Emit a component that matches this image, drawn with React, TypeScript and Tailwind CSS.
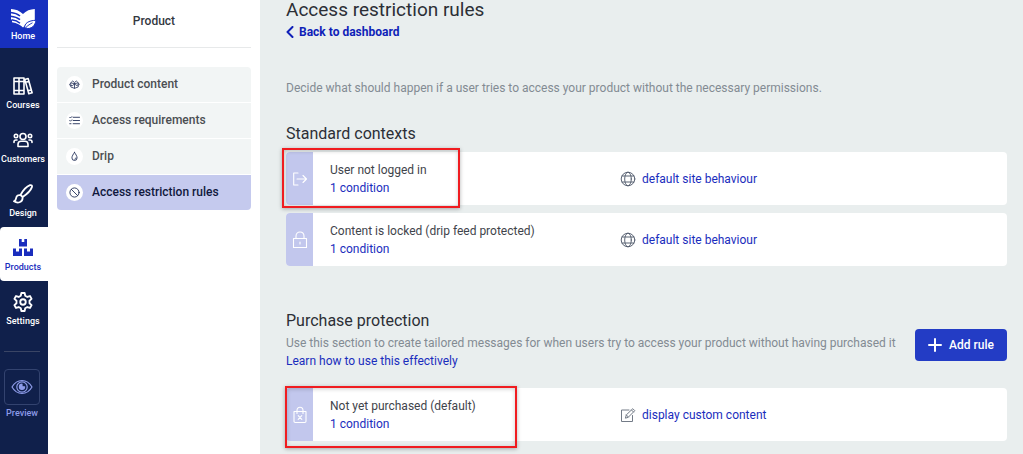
import type { ReactNode } from "react";
import clsx from "clsx";

type IconProps = { className?: string };

function Svg({
  box = "0 0 24 24",
  width = 2,
  className,
  children,
}: IconProps & { box?: string; width?: number; children: ReactNode }) {
  return (
    <svg
      viewBox={box}
      className={clsx("shrink-0", className)}
      fill="none"
      stroke="currentColor"
      strokeWidth={width}
      strokeLinecap="round"
      strokeLinejoin="round"
      aria-hidden="true"
    >
      {children}
    </svg>
  );
}

function LogoIcon() {
  return (
    <svg viewBox="0 0 26 22" className="h-[22px] w-[26px]" aria-hidden="true">
      <path d="M1 1C5.500 1.200 9.800 2.800 13 6 16 2.800 20.300 1.200 24.800 1V12.500L15 17.500 13 19.500C10.500 16.800 7 15 2 14.200V12L1 11.800Z" fill="#fff" />
      <path d="M.5 4.600C4.500 4.900 7.500 5.900 10 8M.5 8.200C4.500 8.500 7.500 9.500 10 11.600M1.500 11.800C5 12.200 7.700 13.100 10 15.200" fill="none" stroke="#1730bf" strokeWidth="1.500" />
      <path d="M14.800 20C14 15.600 18.500 12.400 26 12.300 25.300 17.800 21 21.500 16 20.300Z" fill="#fff" stroke="#1730bf" strokeWidth="1" />
      <path d="M14.300 21.500C16.500 18.300 19 16.600 22.500 14.800" fill="none" stroke="#1730bf" strokeWidth="0.900" />
    </svg>
  );
}

function BooksIcon() {
  return (
    <Svg box="0 0 20 18" width={1.6} className="h-[18px] w-5">
      <path d="M1 1h5v16H1zM6 1h5v16H6zM1 4.500h10M1 13.500h10M11.800 2.400l3.300-.9 4 14.300-3.300.9zM12.600 5.300l3.300-.9M15 13.800l3.300-.9" />
    </Svg>
  );
}

function CustomersIcon() {
  return (
    <Svg box="0 0 20 16" width={1.6} className="h-4 w-5">
      <circle cx="10" cy="4.500" r="3" />
      <circle cx="3" cy="4" r="1.700" />
      <circle cx="17" cy="4" r="1.700" />
      <path d="M5 14.500v-2.200c0-1.800 1.300-3 3-3h4c1.700 0 3 1.200 3 3v2.200zM1 10.500V9.700C1 8.500 1.800 8 3 8h1M19 10.500v-.8C19 8.500 18.200 8 17 8h-1" />
    </Svg>
  );
}

function BrushIcon() {
  return (
    <Svg box="0 0 20 20" width={1.8} className="size-5">
      <path d="M7.500 11C10 6.500 13.500 2.500 17 1.200c1.500-.5 2.400.5 1.900 1.900C17.700 6.600 13.800 10.200 9.600 13zM7.500 11.200c-2.300-.6-4 .5-4.300 2.700-.2 1.600-.7 2.700-2.200 3.400 3.500 2.300 8.600 1.300 8.600-3.200M7.600 11.100l2.200 2.200" />
    </Svg>
  );
}

function BoxesIcon() {
  return (
    <svg viewBox="0 0 20 18" className="h-[18px] w-5" fill="currentColor" aria-hidden="true">
      <path d="M6 0h2.700v3h2.600V0H14v7.500H6zM0 9.500h3v3h3v-3h3V17H0zM11 9.500h3v3h3v-3h3V17h-9z" />
    </svg>
  );
}

function GearIcon() {
  return (
    <Svg width={2} className="size-[22px]">
      <path d="M9.600 5.200 10.200 2.200h3.600l.6 3 2.300 1.300 2.900-1 1.800 3.100-2.300 2v2.800l2.300 2-1.800 3.100-2.900-1-2.300 1.300-.6 3h-3.600l-.6-3-2.300-1.300-2.900 1-1.800-3.100 2.300-2v-2.800l-2.300-2 1.800-3.100 2.900 1z" />
      <circle cx="12" cy="12" r="3" />
    </Svg>
  );
}

function EyeIcon() {
  return (
    <Svg box="0 0 22 16" width={1.2} className="h-4 w-[22px]">
      <path d="M1 8c2.500-4.300 6-6.500 10-6.500S18.500 3.700 21 8c-2.500 4.300-6 6.500-10 6.500S3.500 12.300 1 8z" />
      <circle cx="11" cy="8" r="5.200" />
      <path d="M11 5.200a2.600 2.600 0 1 0 2.600 2.600h-2.600z" fill="currentColor" />
    </Svg>
  );
}

function PackageIcon() {
  return (
    <Svg box="0 0 12 12" width={0.9} className="size-[11px]">
      <path d="M2 6.300v2.400l4 1.500 4-1.500V6.300M6 5v5M1.800 4.300 4 2.200 6 3.800 8 2.200l2.200 2.100M.8 6.200l1-1.900L6 5l4.200-.7 1 1.900L7.700 7 6 5 4.300 7z" />
    </Svg>
  );
}

function ChecklistIcon() {
  return (
    <Svg box="0 0 12 12" width={1} className="size-[11px]">
      <path d="M4.500 2.500h7M4.500 6h7M4.500 9.500h7M.8 2.500l.8.800 1.400-1.500M.8 6l.8.800L3 5.300M.8 9.500h1.400" />
    </Svg>
  );
}

function DropIcon() {
  return (
    <Svg box="0 0 12 12" width={1} className="size-[11px]">
      <path d="M6 1.500C7.300 3.600 8.800 5.500 8.800 7.500a2.800 2.800 0 0 1-5.600 0C3.200 5.500 4.700 3.600 6 1.500zM6.300 9c.8-.2 1.200-.6 1.300-1.400" />
    </Svg>
  );
}

function BanIcon() {
  return (
    <Svg box="0 0 12 12" width={1} className="size-[11px]">
      <circle cx="6" cy="6" r="5" />
      <path d="m2.500 2.500 7 7" />
    </Svg>
  );
}

function LogoutIcon() {
  return (
    <Svg box="0 0 16 16" width={1.1} className="size-4">
      <path d="M6 2H1.700v12H6M5 8h9.500M11 4.500 14.500 8 11 11.500" />
    </Svg>
  );
}

function LockIcon() {
  return (
    <Svg box="0 0 16 18" width={1.1} className="h-[18px] w-4">
      <path d="M1.500 7.500h13v9h-13zM4 7.500V5.200C4 2.800 5.700 1 8 1s4 1.800 4 4.200v2.300M8 11v2" />
    </Svg>
  );
}

function BagIcon() {
  return (
    <Svg box="0 0 16 18" width={1.1} className="h-[18px] w-4">
      <path d="M2 5.500h12v9.800c0 .8-.5 1.200-1.200 1.200H3.200c-.7 0-1.200-.4-1.200-1.200zM5 7.500V4.500C5 2.500 6.200 1.200 8 1.200s3 1.300 3 3.300v3M6.200 9.700l3.600 3.600M9.800 9.700l-3.600 3.600" />
    </Svg>
  );
}

function GlobeIcon() {
  return (
    <Svg box="0 0 16 16" width={1} className="size-4 text-[#596273]">
      <circle cx="8" cy="8" r="6.800" />
      <ellipse cx="8" cy="8" rx="3.300" ry="6.800" />
      <path d="M2 5h12M2 11h12" />
    </Svg>
  );
}

function EditIcon() {
  return (
    <Svg box="0 0 16 16" width={1} className="size-4 text-[#737b87]">
      <path d="M9 3H1.500v11.500h11V8.500M5.500 10.800l.8-2.900 6.500-6.200 2 2-6.400 6.400zM11.500 3l2 2M6.300 7.900l2.100 2.200" />
    </Svg>
  );
}

const mainNav = [
  { label: "Courses", icon: <BooksIcon /> },
  { label: "Customers", icon: <CustomersIcon /> },
  { label: "Design", icon: <BrushIcon /> },
  { label: "Products", icon: <BoxesIcon />, active: true },
  { label: "Settings", icon: <GearIcon /> },
];

const productNav = [
  { label: "Product content", icon: <PackageIcon /> },
  { label: "Access requirements", icon: <ChecklistIcon /> },
  { label: "Drip", icon: <DropIcon /> },
  { label: "Access restriction rules", icon: <BanIcon />, active: true },
];

function Sidebar() {
  return (
    <nav className="flex w-12 shrink-0 flex-col bg-[#10204b] text-[9px] leading-3 font-medium text-white">
      <a href="#home" className="flex h-12 flex-col items-center bg-[#1730bf] pt-2 pr-[2px]">
        <LogoIcon />
        Home
      </a>

      <div className="mt-[17px]">
        {mainNav.map((item) => (
          <a
            key={item.label}
            href="#"
            className={clsx(
              "flex h-[54px] flex-col items-center pt-2 pr-[2px] pb-2",
              item.active && "rounded-l-sm bg-white text-[#1a2dbd]",
            )}
          >
            <span className="flex flex-1 items-center">{item.icon}</span>
            {item.label}
          </a>
        ))}
      </div>

      <div className="mx-1 mt-4 mr-2 border-t border-[#3a4565]" />

      <a href="#preview" className="mx-1 mt-[17px] mr-2 flex flex-col items-center text-[#8d9be8]">
        <span className="flex h-9 w-full items-center justify-center rounded-sm border border-[#33436f]">
          <EyeIcon />
        </span>
        <span className="mt-[2px]">Preview</span>
      </a>
    </nav>
  );
}

function ProductPanel() {
  return (
    <aside className="w-[212px] shrink-0 bg-white px-[9px]">
      <div className="border-b border-[#e7e9ea] pt-3 pb-[17px] text-center text-[12px] leading-[18px] font-medium text-[#33383f]">
        Product
      </div>

      <nav className="mt-[19px] flex flex-col gap-px overflow-hidden rounded">
        {productNav.map((item) => (
          <a
            key={item.label}
            href="#"
            className={clsx(
              "flex h-[35px] items-center gap-[9px] px-[9px] pb-px text-[12px] font-medium",
              item.active
                ? "bg-[#c5caee] text-[#10183d]"
                : "bg-[#f2f5f5] text-[#4b4e52]",
            )}
          >
            <span className="flex size-[17px] items-center justify-center rounded-full bg-white text-[#27345c]">
              {item.icon}
            </span>
            {item.label}
          </a>
        ))}
      </nav>
    </aside>
  );
}

function RuleCard({
  icon,
  title,
  resultIcon,
  result,
  children,
}: {
  icon: ReactNode;
  title: string;
  resultIcon: ReactNode;
  result: string;
  children?: ReactNode;
}) {
  return (
    <div className="relative flex min-h-[53px] rounded bg-white">
      <div className="flex w-[27px] shrink-0 items-center justify-center rounded-l bg-[#c2c7ed] text-white">
        {icon}
      </div>
      <div className="grid flex-1 grid-cols-[290px_1fr] items-center pl-[17px]">
        <div className="leading-[18px]">
          <p>{title}</p>
          <a href="#condition" className="text-[#1a2dbd]">
            1 condition
          </a>
        </div>
        <a href="#result" className="flex items-center gap-[6px] text-[#1a2dbd]">
          {resultIcon}
          {result}
        </a>
      </div>
      {children}
    </div>
  );
}

export default function App() {
  return (
    <div className="flex min-h-screen bg-[#e9eeee] font-[Roboto,sans-serif] text-[12px] text-[#3f444b]">
      <Sidebar />
      <ProductPanel />

      <main className="min-w-0 flex-1 pr-4 pl-[26px]">
        <h1 className="text-[19px] leading-5 text-[#2c2f36]">
          Access restriction rules
        </h1>
        <a
          href="#dashboard"
          className="mt-1 flex items-center gap-[5px] leading-4 font-bold text-[#0f1fb8]"
        >
          <Svg box="0 0 8 12" width={2} className="h-3 w-2">
            <path d="M6.500 1 1.500 6l5 5" />
          </Svg>
          Back to dashboard
        </a>
        <p className="mt-10 leading-4 text-[#838b93]">
          Decide what should happen if a user tries to access your product
          without the necessary permissions.
        </p>

        <section className="mt-7">
          <h2 className="text-[16px] leading-5 text-[#2c2f36]">Standard contexts</h2>
          <div className="mt-2 flex flex-col gap-2">
            <RuleCard
              icon={<LogoutIcon />}
              title="User not logged in"
              resultIcon={<GlobeIcon />}
              result="default site behaviour"
            >
              <span className="pointer-events-none absolute -top-1 -left-1 h-[60px] w-[178px] border-2 border-[#f01c20] shadow-[0_1px_4px_rgba(0,0,0,0.3),inset_0_1px_4px_rgba(0,0,0,0.2)]" />
            </RuleCard>
            <RuleCard
              icon={<LockIcon />}
              title="Content is locked (drip feed protected)"
              resultIcon={<GlobeIcon />}
              result="default site behaviour"
            />
          </div>
        </section>

        <section className="mt-[45px]">
          <div className="flex items-center justify-between">
            <div>
              <h2 className="text-[16px] leading-5 text-[#2c2f36]">Purchase protection</h2>
              <p className="mt-[3px] leading-[18px] text-[#838b93]">
                Use this section to create tailored messages for when users try
                to access your product without having purchased it
              </p>
              <a href="#learn" className="block leading-[18px] text-[#1a2dbd]">
                Learn how to use this effectively
              </a>
            </div>
            <button
              type="button"
              className="mt-2 flex h-8 w-[92px] shrink-0 items-center justify-center gap-[7px] rounded-sm bg-[#233cc5] font-medium text-white"
            >
              <Svg box="0 0 14 14" width={2} className="size-[14px]">
                <path d="M7 1v12M1 7h12" />
              </Svg>
              Add rule
            </button>
          </div>
          <div className="mt-[18px]">
            <RuleCard
              icon={<BagIcon />}
              title="Not yet purchased (default)"
              resultIcon={<EditIcon />}
              result="display custom content"
            >
              <span className="pointer-events-none absolute -top-[2px] -left-px h-[62px] w-[232px] border-2 border-[#f01c20] shadow-[0_1px_4px_rgba(0,0,0,0.3),inset_0_1px_4px_rgba(0,0,0,0.2)]" />
            </RuleCard>
          </div>
        </section>
      </main>
    </div>
  );
}
